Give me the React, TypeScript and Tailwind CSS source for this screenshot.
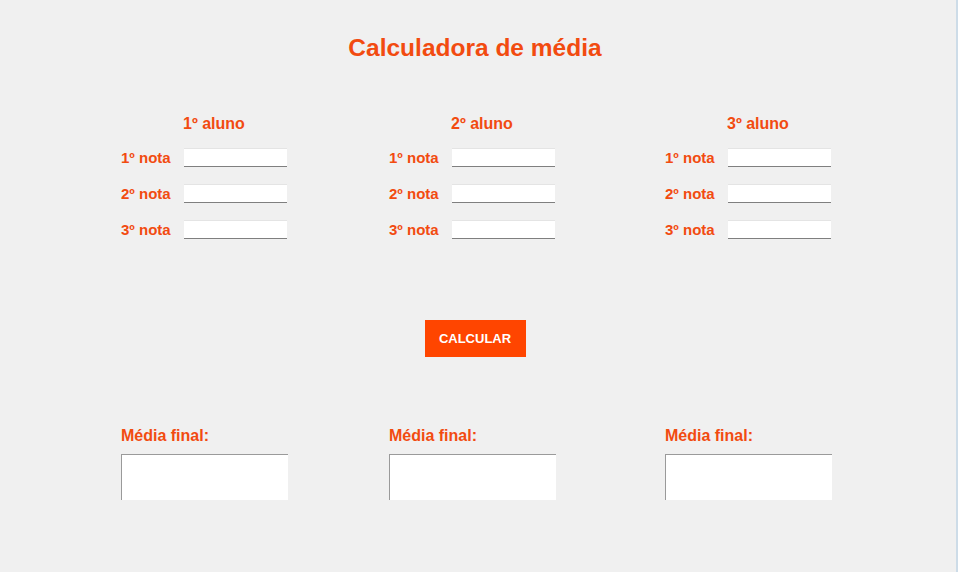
const alunos = ["1º aluno", "2º aluno", "3º aluno"];
const notas = ["1º nota", "2º nota", "3º nota"];
const colWidths = ["w-[268px]", "w-[276px]", "w-[200px]"];

function NotaInput() {
  return (
    <input
      type="text"
      className="w-[103px] h-[19px] bg-white border-t border-t-[#e4e4e4] border-b border-b-[#7f7f7f] outline-none"
    />
  );
}

function AlunoColumn({ nome, width }: { nome: string; width: string }) {
  return (
    <div className={`${width} shrink-0`}>
      <div className="pl-[62px] text-[16px] leading-none font-bold text-[#f24b10]">{nome}</div>
      <div className="mt-[16px] flex flex-col gap-[17px]">
        {notas.map((n) => (
          <div key={n} className="flex items-center">
            <span className="w-[63px] text-[15px] leading-none font-bold text-[#f24b10]">{n}</span>
            <NotaInput />
          </div>
        ))}
      </div>
    </div>
  );
}

function MediaColumn({ width }: { width: string }) {
  return (
    <div className={`${width} shrink-0`}>
      <div className="text-[16px] leading-none font-bold text-[#f24b10]">Média final:</div>
      <textarea className="mt-[10px] block w-[167px] h-[46px] bg-white border-t border-l border-[#9a9a9a] resize-none outline-none" />
    </div>
  );
}

export default function App() {
  return (
    <div
      className="w-[958px] h-[572px] bg-[#f0f0f0] border-r-2 border-[#cddce8] overflow-hidden pl-[121px]"
      style={{ fontFamily: '"Liberation Sans", Arial, sans-serif' }}
    >
      <div className="w-[708px]">
        <h1 className="pt-[36px] text-center text-[24.5px] leading-[24px] font-bold text-[#f24b10]">
          Calculadora de média
        </h1>
      </div>

      <div className="mt-[56px] flex">
        {alunos.map((a, i) => (
          <AlunoColumn key={a} nome={a} width={colWidths[i]} />
        ))}
      </div>

      <div className="w-[708px] mt-[81px] flex justify-center">
        <button className="w-[101px] h-[37px] bg-[#ff4500] text-white text-[13px] font-bold">
          CALCULAR
        </button>
      </div>

      <div className="mt-[71px] flex">
        {colWidths.map((w) => (
          <MediaColumn key={w} width={w} />
        ))}
      </div>
    </div>
  );
}
